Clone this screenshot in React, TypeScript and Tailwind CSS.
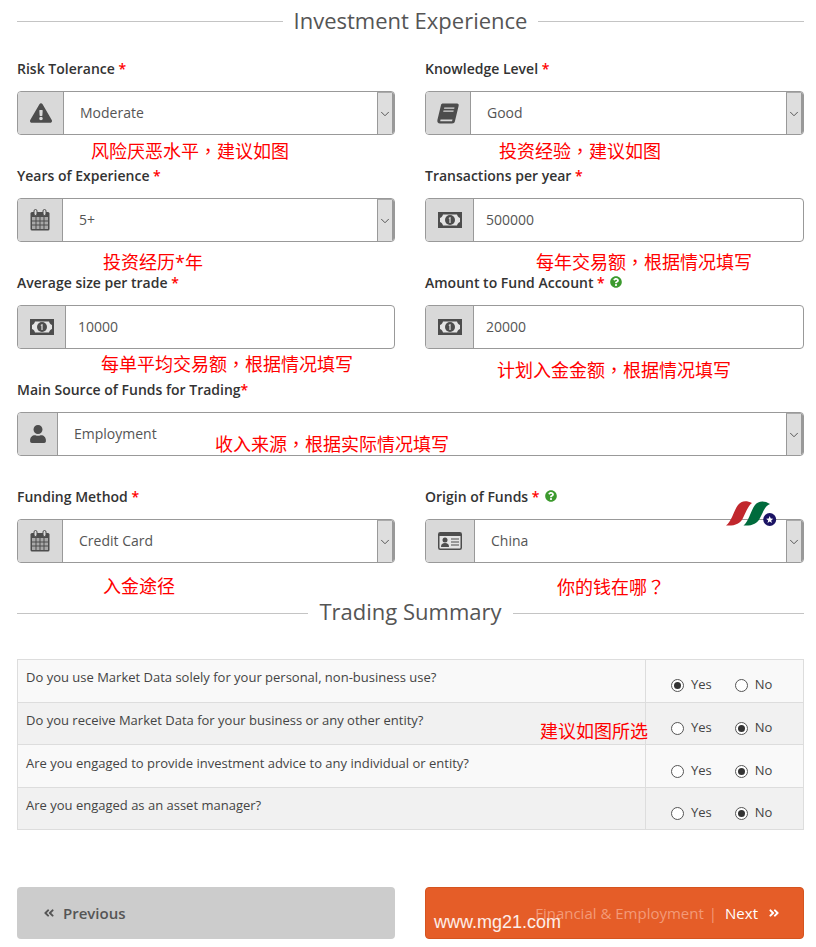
import type { ReactNode } from 'react';
import {
  FaExclamationTriangle,
  FaUser,
  FaQuestionCircle,
  FaAngleDoubleLeft,
  FaAngleDoubleRight,
} from 'react-icons/fa';
import { FiChevronDown } from 'react-icons/fi';

const FONT = "font-['Open_Sans','Noto_Sans_CJK_SC',sans-serif]";

const CalendarIcon = () => (
  <svg width="20" height="22" viewBox="0 0 20 22" fill="none">
    <rect x="0.5" y="3" width="19" height="18.5" rx="1.5" fill="#4d4d4d" />
    <rect x="2" y="8" width="16" height="12" fill="#a8a8a8" />
    <path d="M6 8v12M10 8v12M14 8v12M2 12h16M2 16h16" stroke="#4d4d4d" />
    <rect x="4" y="0.5" width="3" height="6" rx="1.5" fill="#d9d9d9" stroke="#4d4d4d" />
    <rect x="13" y="0.5" width="3" height="6" rx="1.5" fill="#d9d9d9" stroke="#4d4d4d" />
  </svg>
);

const MoneyIcon = () => (
  <svg width="24" height="16" viewBox="0 0 24 16">
    <rect width="24" height="16" fill="#4d4d4d" />
    <path d="M5 2.5H19C19.5 4.5 20.5 5.5 22 6V10C20.5 10.5 19.5 11.5 19 13.5H5C4.5 11.5 3.5 10.5 2 10V6C3.5 5.5 4.5 4.5 5 2.5Z" fill="#e4e4e4" />
    <circle cx="12" cy="8" r="5" fill="#4d4d4d" />
    <path d="M10.8 5.8L12.6 4.9V11H11.4V6.6L10.8 6.9Z" fill="#e4e4e4" />
  </svg>
);

const BookIcon = () => (
  <svg width="22" height="21" viewBox="0 0 22 21">
    <path d="M6 0.5H20C21.5 0.5 22 1.5 21.6 3L18 18C17.6 19.8 16.6 20.5 15 20.5H3C1 20.5 0 19 0.4 17L4 2C4.2 1 5 0.5 6 0.5Z" fill="#4d4d4d" />
    <path d="M3.5 16.5H15.5L15 18.2H3.2Z" fill="#d9d9d9" />
    <path d="M7.3 4.5H17.5L17.2 5.8H7ZM6.5 7.5H16.7L16.4 8.8H6.2Z" fill="#d9d9d9" />
  </svg>
);

const IdCardIcon = () => (
  <svg width="24" height="18" viewBox="0 0 24 18">
    <rect x="0.75" y="0.75" width="22.5" height="16.5" rx="1.5" fill="#e4e4e4" stroke="#4d4d4d" strokeWidth="1.5" />
    <rect x="1" y="1" width="22" height="3" fill="#4d4d4d" />
    <circle cx="7" cy="8" r="2.5" fill="#4d4d4d" />
    <path d="M3 15C3 12 4.5 11 7 11C9.5 11 11 12 11 15Z" fill="#4d4d4d" />
    <path d="M13 7H21M13 10H21M13 13H21" stroke="#4d4d4d" strokeWidth="1.2" />
  </svg>
);

function Heading({ children, textClass }: { children: ReactNode; textClass: string }) {
  return (
    <div className="flex items-center gap-[11px] h-[42px]">
      <div className="flex-1 h-px bg-[#c4c4c4]" />
      <div className={`text-[22px] leading-[40px] text-[#555] ${textClass}`}>{children}</div>
      <div className="flex-1 h-px bg-[#c4c4c4]" />
    </div>
  );
}

function Field({
  label,
  star = ' *',
  help,
  icon,
  addonClass,
  value,
  select,
}: {
  label: string;
  star?: string;
  help?: boolean;
  icon: ReactNode;
  addonClass: string;
  value: string;
  select?: boolean;
}) {
  return (
    <div className="h-[107px]">
      <div className="h-[20px] mb-[13px] flex items-center text-[14px] font-semibold text-[#333] whitespace-pre">
        {label}
        <span className="text-[#f00]">{star}</span>
        {help && <FaQuestionCircle className="ml-[5px] text-[12px] text-[#3c9a2e]" />}
      </div>
      <div className="h-[44px] flex border border-[#999] rounded-[4px] overflow-hidden bg-white text-[14px] text-[#555]">
        <div className={`${addonClass} shrink-0 flex items-center justify-center bg-[#d9d9d9] border-r border-[#999] text-[#4d4d4d]`}>
          {icon}
        </div>
        <div className={`flex-1 flex items-center pb-[2px] ${select ? 'pl-4' : 'pl-3'}`}>{value}</div>
        {select && (
          <div className="w-[17px] shrink-0 flex items-center justify-center bg-[#dedede] border-l border-[#999] border-r-2 border-r-[#999] border-t border-t-[#aaa]">
            <FiChevronDown strokeWidth={1.5} className="text-[14px] text-[#444]" />
          </div>
        )}
      </div>
    </div>
  );
}

function Radio({ label, on }: { label: string; on?: boolean }) {
  return (
    <div className="flex items-center gap-[7px]">
      <div className="w-[13px] h-[13px] rounded-full border border-[#555] bg-white flex items-center justify-center">
        {on && <div className="w-[7px] h-[7px] rounded-full bg-[#333]" />}
      </div>
      <span className="-mt-[2px]">{label}</span>
    </div>
  );
}

const QUESTIONS = [
  { text: 'Do you use Market Data solely for your personal, non-business use?', yes: true, h: 'h-[42px]', bg: 'bg-[#f9f9f9]', textPt: 'pt-[8px]', radioPt: 'pt-[17px]' },
  { text: 'Do you receive Market Data for your business or any other entity?', yes: false, h: 'h-[42px]', bg: 'bg-[#f1f1f1]', textPt: 'pt-[8px]', radioPt: 'pt-[17px]' },
  { text: 'Are you engaged to provide investment advice to any individual or entity?', yes: false, h: 'h-[43px]', bg: 'bg-[#f9f9f9]', textPt: 'pt-[9px]', radioPt: 'pt-[18px]' },
  { text: 'Are you engaged as an asset manager?', yes: false, h: 'h-[42px]', bg: 'bg-[#f1f1f1]', textPt: 'pt-[8px]', radioPt: 'pt-[17px]' },
];

const NOTES = [
  { text: '风险厌恶水平，建议如图', cls: 'left-[91px] top-[137px]' },
  { text: '投资经验，建议如图', cls: 'left-[499px] top-[137px]' },
  { text: '投资经历*年', cls: 'left-[103px] top-[249px]' },
  { text: '每年交易额，根据情况填写', cls: 'left-[536px] top-[248px]' },
  { text: '每单平均交易额，根据情况填写', cls: 'left-[101px] top-[350px]' },
  { text: '计划入金金额，根据情况填写', cls: 'left-[497px] top-[356px]' },
  { text: '收入来源，根据实际情况填写', cls: 'left-[215px] top-[430px]' },
  { text: '入金途径', cls: 'left-[103px] top-[573px]' },
  { text: '你的钱在哪？', cls: 'left-[557px] top-[573px]' },
  { text: '建议如图所选', cls: 'left-[540px] top-[718px]' },
];

// TC glyphs keep the comma and question mark in the middle of the cell, as the reference does
function Note({ text }: { text: string }) {
  return (
    <>
      {text.split(/([，？])/).map((part, i) =>
        part === '，' || part === '？' ? (
          <span key={i} className="font-['Noto_Sans_CJK_TC',sans-serif]">{part}</span>
        ) : (
          part
        ),
      )}
    </>
  );
}

export default function App() {
  return (
    <div className={`relative w-[816px] h-[947px] overflow-hidden bg-white pl-[17px] pr-[12px] ${FONT}`}>
      <div className="mb-4">
        <Heading textClass="pb-[2px]">Investment Experience</Heading>
      </div>

      <div className="grid grid-cols-[378px_379px] gap-x-[30px]">
        <Field label="Risk Tolerance" select value="Moderate" addonClass="w-[46px]" icon={<FaExclamationTriangle className="text-[22px]" />} />
        <Field label="Knowledge Level" select value="Good" addonClass="w-[45px]" icon={<BookIcon />} />
        <Field label="Years of Experience" select value="5+" addonClass="w-[45px]" icon={<CalendarIcon />} />
        <Field label="Transactions per year" value="500000" addonClass="w-[48px]" icon={<MoneyIcon />} />
        <Field label="Average size per trade" value="10000" addonClass="w-[48px]" icon={<MoneyIcon />} />
        <Field label="Amount to Fund Account" help value="20000" addonClass="w-[48px]" icon={<MoneyIcon />} />
        <div className="col-span-2">
          <Field label="Main Source of Funds for Trading" star="*" select value="Employment" addonClass="w-[40px]" icon={<FaUser className="text-[18px]" />} />
        </div>
        <Field label="Funding Method" select value="Credit Card" addonClass="w-[45px]" icon={<CalendarIcon />} />
        <Field label="Origin of Funds" help select value="China" addonClass="w-[49px]" icon={<IdCardIcon />} />
      </div>

      <div className="-mt-px">
        <Heading textClass="pb-[4px]">Trading Summary</Heading>
      </div>

      <div className="mt-[25px] border border-[#ddd] text-[13px] text-[#444]">
        {QUESTIONS.map((q, i) => (
          <div key={q.text} className={`flex ${q.h} ${q.bg} ${i > 0 ? 'border-t border-[#ddd]' : ''}`}>
            <div className={`flex-1 pl-2 ${q.textPt} leading-[18px] border-r border-[#ddd]`}>{q.text}</div>
            <div className={`w-[157px] pl-[25px] ${q.radioPt} flex items-start gap-[23px] leading-[18px]`}>
              <Radio label="Yes" on={q.yes} />
              <Radio label="No" on={!q.yes} />
            </div>
          </div>
        ))}
      </div>

      <div className="mt-[57px] grid grid-cols-[378px_379px] gap-x-[30px] text-[15px]">
        <div className="h-[52px] rounded-[4px] bg-[#cccccc] pl-[26px] flex items-center font-semibold text-[#555]">
          <FaAngleDoubleLeft className="text-[12px] mr-[8px]" />
          Previous
        </div>
        <div className="h-[52px] rounded-[4px] bg-[#e55d28] border border-[#d5541f] pr-[23px] flex items-center justify-end text-white">
          <span className="text-[#f39a78]">Financial &amp; Employment</span>
          <span className="text-[#f39a78] ml-[5px] mr-[8px]">|</span>
          Next
          <FaAngleDoubleRight className="text-[12px] ml-[10px]" />
        </div>
      </div>

      {NOTES.map((n) => (
        <div key={n.text} className={`absolute ${n.cls} text-[18px] leading-[26px] text-[#f00] whitespace-nowrap`}>
          <Note text={n.text} />
        </div>
      ))}

      <svg className="absolute left-[726px] top-[500px]" width="52" height="28" viewBox="0 0 52 28">
        <path d="M0 25.5C6 21 8 10 12 5C15 1 20 0 26 3C22 6 20 12 17 18C14 24 9 26 0 25.5Z" fill="#c1272d" />
        <path d="M17.5 25.5C23 21 25 10 29 5C32 1 38 0 44 4C39 6 37 12 34 18C31 24 26 26 17.5 25.5Z" fill="#006b3c" />
        <circle cx="43.7" cy="19.5" r="6.5" fill="#1b1464" />
        <path d="M43.7 16 L44.7 18.6 L47.2 18.8 L45.2 20.4 L45.9 23 L43.7 21.5 L41.5 23 L42.2 20.4 L40.2 18.8 L42.7 18.6 Z" fill="#fff" />
      </svg>

      <div className="absolute left-[434px] top-[911px] font-['Liberation_Sans',sans-serif] text-[18px] leading-[22px] text-white/90 whitespace-nowrap">
        www.mg21.com
      </div>
    </div>
  );
}
